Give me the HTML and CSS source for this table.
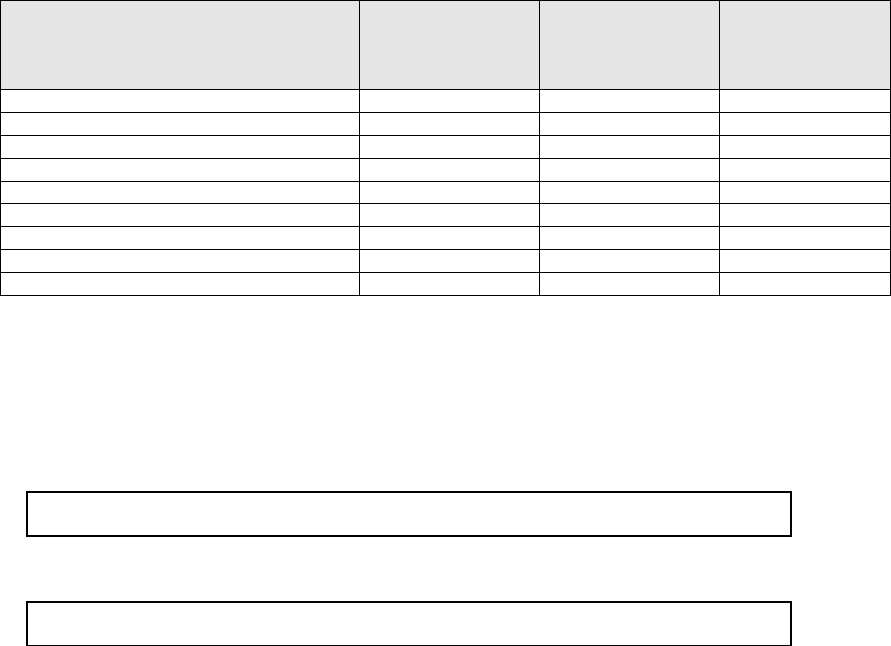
FILE: index.html
```html
<!DOCTYPE html>
<html lang="en">
<head>
<meta charset="utf-8">
<title>Table</title>
<link rel="stylesheet" href="styles.css">
</head>
<body>
<div class="sheet">
  <div class="grid">
    <div class="cell head"></div><div class="cell head"></div><div class="cell head"></div><div class="cell head"></div>
    <div class="cell"></div><div class="cell"></div><div class="cell"></div><div class="cell"></div>
    <div class="cell"></div><div class="cell"></div><div class="cell"></div><div class="cell"></div>
    <div class="cell"></div><div class="cell"></div><div class="cell"></div><div class="cell"></div>
    <div class="cell"></div><div class="cell"></div><div class="cell"></div><div class="cell"></div>
    <div class="cell"></div><div class="cell"></div><div class="cell"></div><div class="cell"></div>
    <div class="cell"></div><div class="cell"></div><div class="cell"></div><div class="cell"></div>
    <div class="cell"></div><div class="cell"></div><div class="cell"></div><div class="cell"></div>
    <div class="cell"></div><div class="cell"></div><div class="cell"></div><div class="cell"></div>
    <div class="cell"></div><div class="cell"></div><div class="cell"></div><div class="cell"></div>
  </div>
  <div class="boxes">
    <div class="box"></div>
    <div class="box"></div>
  </div>
</div>
</body>
</html>
```
FILE: styles.css
```css
html, body {
  margin: 0;
  padding: 0;
  background: #ffffff;
  font-family: "Liberation Sans", Arial, sans-serif;
}
.sheet {
  width: 891px;
}
.grid {
  display: grid;
  grid-template-columns: 359px 180px 180px 171px;
  grid-template-rows: 89px repeat(9, 22.89px);
  border-left: 1px solid #000;
  border-top: 1px solid #000;
}
.cell {
  border-right: 1px solid #000;
  border-bottom: 1px solid #000;
  box-sizing: border-box;
}
.cell.head {
  background: #e5e5e5;
}
.boxes {
  display: flex;
  flex-direction: column;
  gap: 64px;
  padding: 195px 0 0 26px;
}
.box {
  width: 766px;
  height: 46px;
  border: 2px solid #000;
  box-sizing: border-box;
}
```
